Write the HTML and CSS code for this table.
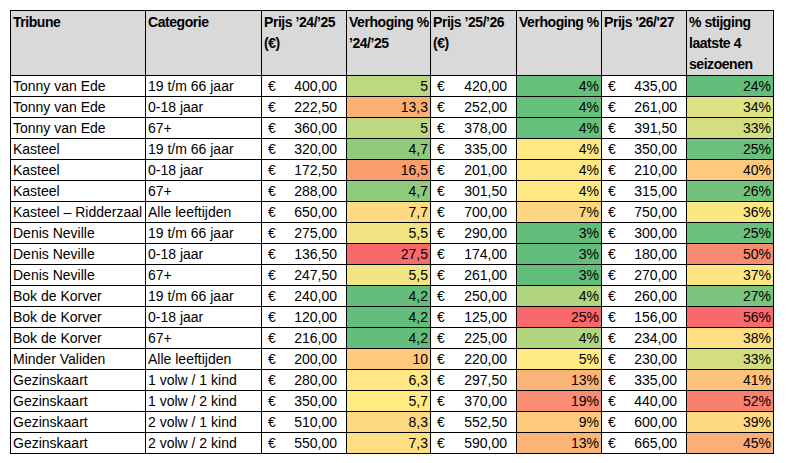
FILE: index.html
```html
<!DOCTYPE html>
<html lang="nl">
<head>
<meta charset="utf-8">
<title>Prijzen seizoenkaarten</title>
<link rel="stylesheet" href="styles.css">
</head>
<body>
<table class="sheet">
<colgroup>
<col class="c1"><col class="c2"><col class="c3"><col class="c4"><col class="c5"><col class="c6"><col class="c7"><col class="c8">
</colgroup>
<thead>
<tr>
<th>Tribune</th>
<th>Categorie</th>
<th>Prijs ’24/’25<br>(€)</th>
<th>Verhoging %<br>’24/’25</th>
<th>Prijs ’25/’26<br>(€)</th>
<th>Verhoging %</th>
<th>Prijs '26/'27</th>
<th>% stijging<br>laatste 4<br>seizoenen</th>
</tr>
</thead>
<tbody>
<tr><td>Tonny van Ede</td><td>19 t/m 66 jaar</td><td class="eur"><span>€</span><span>400,00</span></td><td class="num" style="background:#bcd880">5</td><td class="eur"><span>€</span><span>420,00</span></td><td class="num" style="background:#66bf7b">4%</td><td class="eur"><span>€</span><span>435,00</span></td><td class="num" style="background:#63be7b">24%</td></tr>
<tr><td>Tonny van Ede</td><td>0-18 jaar</td><td class="eur"><span>€</span><span>222,50</span></td><td class="num" style="background:#fbb173">13,3</td><td class="eur"><span>€</span><span>252,00</span></td><td class="num" style="background:#66bf7b">4%</td><td class="eur"><span>€</span><span>261,00</span></td><td class="num" style="background:#dfe182">34%</td></tr>
<tr><td>Tonny van Ede</td><td>67+</td><td class="eur"><span>€</span><span>360,00</span></td><td class="num" style="background:#bcd880">5</td><td class="eur"><span>€</span><span>378,00</span></td><td class="num" style="background:#66bf7b">4%</td><td class="eur"><span>€</span><span>391,50</span></td><td class="num" style="background:#d3de81">33%</td></tr>
<tr><td>Kasteel</td><td>19 t/m 66 jaar</td><td class="eur"><span>€</span><span>320,00</span></td><td class="num" style="background:#8fca7d">4,7</td><td class="eur"><span>€</span><span>335,00</span></td><td class="num" style="background:#ffe884">4%</td><td class="eur"><span>€</span><span>350,00</span></td><td class="num" style="background:#6bc07c">25%</td></tr>
<tr><td>Kasteel</td><td>0-18 jaar</td><td class="eur"><span>€</span><span>172,50</span></td><td class="num" style="background:#f99f6e">16,5</td><td class="eur"><span>€</span><span>201,00</span></td><td class="num" style="background:#ffe884">4%</td><td class="eur"><span>€</span><span>210,00</span></td><td class="num" style="background:#fdc97d">40%</td></tr>
<tr><td>Kasteel</td><td>67+</td><td class="eur"><span>€</span><span>288,00</span></td><td class="num" style="background:#8fca7d">4,7</td><td class="eur"><span>€</span><span>301,50</span></td><td class="num" style="background:#ffe884">4%</td><td class="eur"><span>€</span><span>315,00</span></td><td class="num" style="background:#72c27c">26%</td></tr>
<tr><td>Kasteel – Ridderzaal</td><td>Alle leeftijden</td><td class="eur"><span>€</span><span>650,00</span></td><td class="num" style="background:#fedb82">7,7</td><td class="eur"><span>€</span><span>700,00</span></td><td class="num" style="background:#fed580">7%</td><td class="eur"><span>€</span><span>750,00</span></td><td class="num" style="background:#fbe884">36%</td></tr>
<tr><td>Denis Neville</td><td>19 t/m 66 jaar</td><td class="eur"><span>€</span><span>275,00</span></td><td class="num" style="background:#f2e383">5,5</td><td class="eur"><span>€</span><span>290,00</span></td><td class="num" style="background:#63be7b">3%</td><td class="eur"><span>€</span><span>300,00</span></td><td class="num" style="background:#6bc07c">25%</td></tr>
<tr><td>Denis Neville</td><td>0-18 jaar</td><td class="eur"><span>€</span><span>136,50</span></td><td class="num" style="background:#f8696b">27,5</td><td class="eur"><span>€</span><span>174,00</span></td><td class="num" style="background:#63be7b">3%</td><td class="eur"><span>€</span><span>180,00</span></td><td class="num" style="background:#f98a72">50%</td></tr>
<tr><td>Denis Neville</td><td>67+</td><td class="eur"><span>€</span><span>247,50</span></td><td class="num" style="background:#f2e383">5,5</td><td class="eur"><span>€</span><span>261,00</span></td><td class="num" style="background:#63be7b">3%</td><td class="eur"><span>€</span><span>270,00</span></td><td class="num" style="background:#ffe683">37%</td></tr>
<tr><td>Bok de Korver</td><td>19 t/m 66 jaar</td><td class="eur"><span>€</span><span>240,00</span></td><td class="num" style="background:#63be7b">4,2</td><td class="eur"><span>€</span><span>250,00</span></td><td class="num" style="background:#b2d57f">4%</td><td class="eur"><span>€</span><span>260,00</span></td><td class="num" style="background:#7bc47d">27%</td></tr>
<tr><td>Bok de Korver</td><td>0-18 jaar</td><td class="eur"><span>€</span><span>120,00</span></td><td class="num" style="background:#63be7b">4,2</td><td class="eur"><span>€</span><span>125,00</span></td><td class="num" style="background:#f8696b">25%</td><td class="eur"><span>€</span><span>156,00</span></td><td class="num" style="background:#f8696b">56%</td></tr>
<tr><td>Bok de Korver</td><td>67+</td><td class="eur"><span>€</span><span>216,00</span></td><td class="num" style="background:#63be7b">4,2</td><td class="eur"><span>€</span><span>225,00</span></td><td class="num" style="background:#b2d57f">4%</td><td class="eur"><span>€</span><span>234,00</span></td><td class="num" style="background:#fedf82">38%</td></tr>
<tr><td>Minder Validen</td><td>Alle leeftijden</td><td class="eur"><span>€</span><span>200,00</span></td><td class="num" style="background:#fdc97d">10</td><td class="eur"><span>€</span><span>220,00</span></td><td class="num" style="background:#ffea84">5%</td><td class="eur"><span>€</span><span>230,00</span></td><td class="num" style="background:#d3de81">33%</td></tr>
<tr><td>Gezinskaart</td><td>1 volw / 1 kind</td><td class="eur"><span>€</span><span>280,00</span></td><td class="num" style="background:#ffe784">6,3</td><td class="eur"><span>€</span><span>297,50</span></td><td class="num" style="background:#fbb477">13%</td><td class="eur"><span>€</span><span>335,00</span></td><td class="num" style="background:#fdc27c">41%</td></tr>
<tr><td>Gezinskaart</td><td>1 volw / 2 kind</td><td class="eur"><span>€</span><span>350,00</span></td><td class="num" style="background:#ffea84">5,7</td><td class="eur"><span>€</span><span>370,00</span></td><td class="num" style="background:#f98c73">19%</td><td class="eur"><span>€</span><span>440,00</span></td><td class="num" style="background:#f97f6f">52%</td></tr>
<tr><td>Gezinskaart</td><td>2 volw / 1 kind</td><td class="eur"><span>€</span><span>510,00</span></td><td class="num" style="background:#fed880">8,3</td><td class="eur"><span>€</span><span>552,50</span></td><td class="num" style="background:#fdca7e">9%</td><td class="eur"><span>€</span><span>600,00</span></td><td class="num" style="background:#fed980">39%</td></tr>
<tr><td>Gezinskaart</td><td>2 volw / 2 kind</td><td class="eur"><span>€</span><span>550,00</span></td><td class="num" style="background:#fedf82">7,3</td><td class="eur"><span>€</span><span>590,00</span></td><td class="num" style="background:#fbb477">13%</td><td class="eur"><span>€</span><span>665,00</span></td><td class="num" style="background:#fbae77">45%</td></tr>
</tbody>
</table>
</body>
</html>
```

FILE: styles.css
```css
html, body {
  margin: 0;
  padding: 0;
  background: #ffffff;
}

body {
  padding: 10px 0 0 10px;
  font-family: "Liberation Sans", Arial, sans-serif;
  font-size: 14px;
  color: #000000;
}

.sheet {
  border-collapse: collapse;
  table-layout: fixed;
  width: 764px;
}

.c1 { width: 135px; }
.c2 { width: 116px; }
.c3 { width: 85px; }
.c4 { width: 84px; }
.c5 { width: 86px; }
.c6 { width: 85px; }
.c7 { width: 85px; }
.c8 { width: 87px; }

.sheet th,
.sheet td {
  border: 1px solid #000000;
  padding: 0 2px;
  white-space: nowrap;
  overflow: hidden;
}

.sheet th {
  background: #d9d9d9;
  font-weight: bold;
  text-align: left;
  vertical-align: top;
  height: 63px;
  padding-top: 1px;
  line-height: 21px;
  letter-spacing: -0.45px;
}

.sheet td {
  height: 20px;
  line-height: 20px;
  vertical-align: middle;
}

.sheet td.num {
  text-align: right;
}

.sheet td.eur span:first-child {
  float: left;
  padding-left: 4px;
}

.sheet td.eur span:last-child {
  float: right;
  padding-right: 7px;
}
```
